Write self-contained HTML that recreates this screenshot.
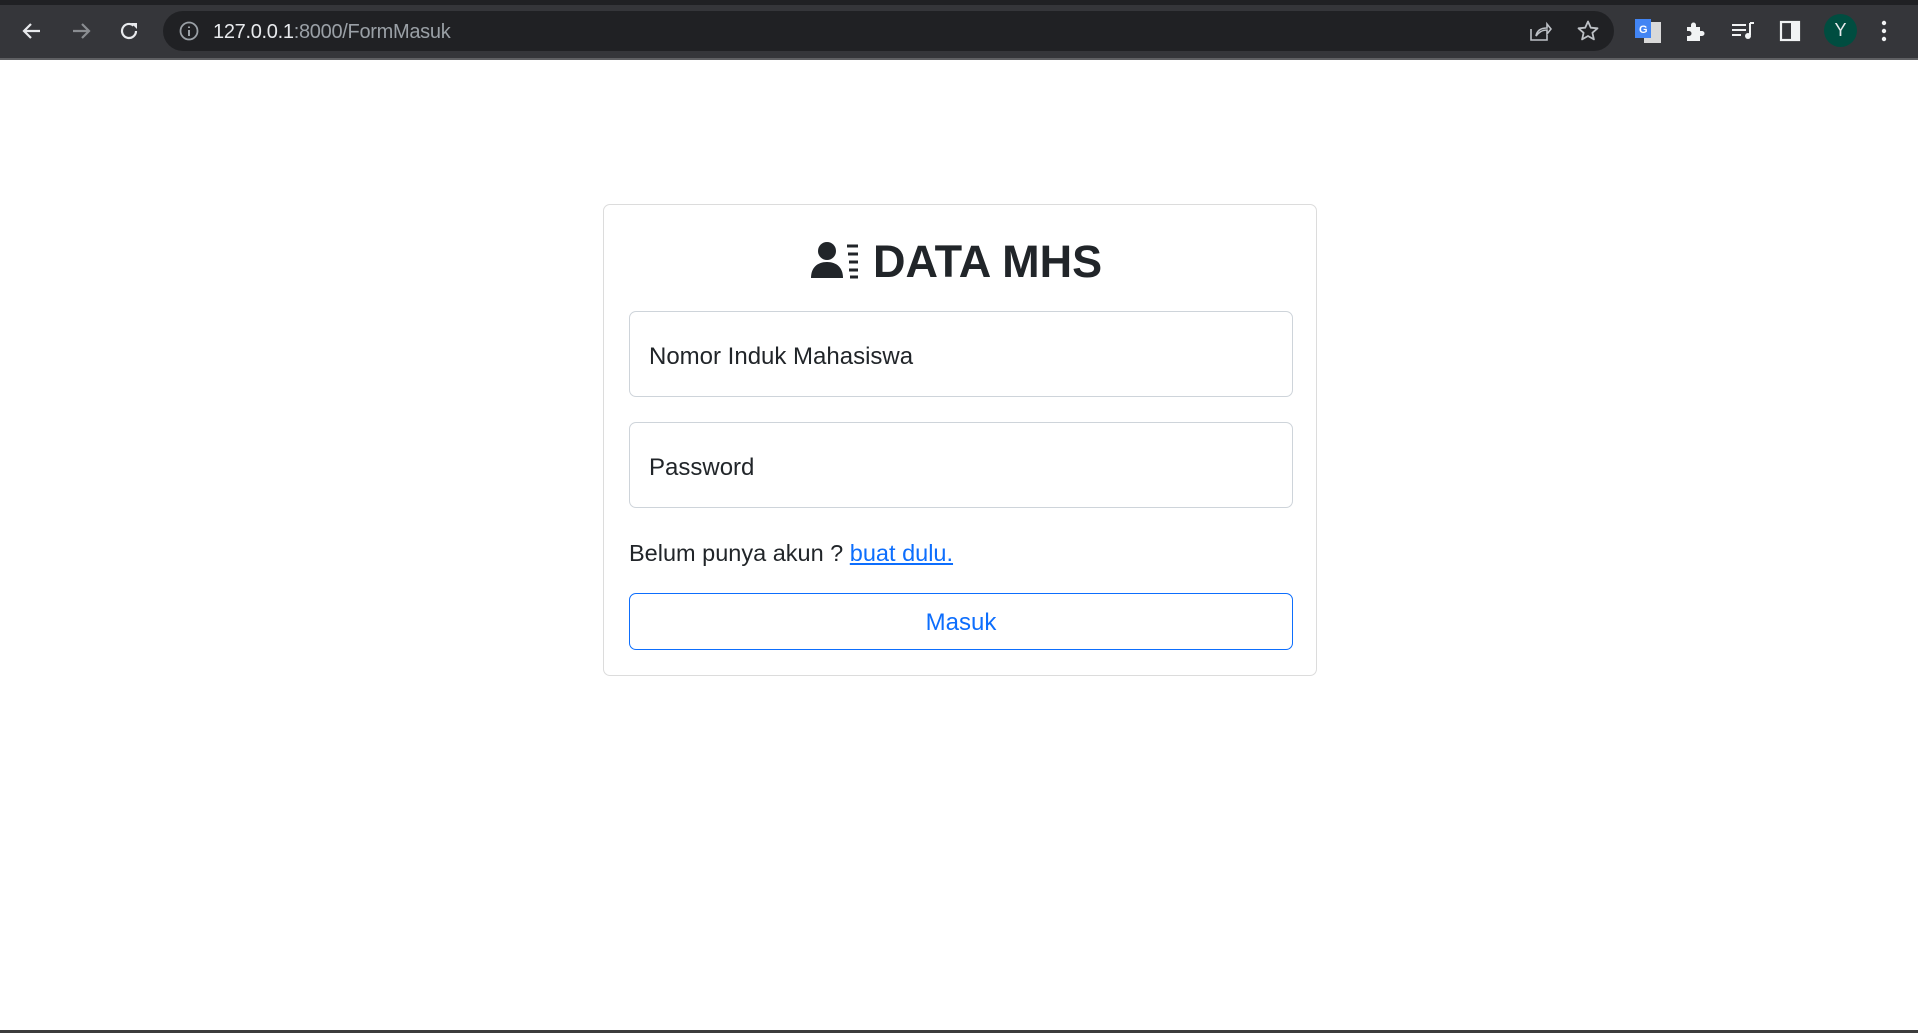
<!DOCTYPE html>
<html><head><meta charset="utf-8"><style>
*{margin:0;padding:0;box-sizing:border-box}
body{width:1918px;height:1033px;background:#fff;font-family:"Liberation Sans",sans-serif;position:relative;overflow:hidden}
.top{position:absolute;left:0;top:0;width:1918px;height:58px;background:#35363a}
.strip{position:absolute;left:0;top:0;width:1918px;height:5px;background:#202124}
.line{position:absolute;left:0;top:58px;width:1918px;height:2px;background:#5f6063}
.omni{position:absolute;left:163px;top:11px;width:1451px;height:40px;border-radius:20px;background:#202124}
.url{position:absolute;left:213px;top:21px;font-size:20px;color:#e8eaed;letter-spacing:-0.3px}
.url span{color:#9aa0a6}
.ic{position:absolute}
.card{position:absolute;left:603px;top:204px;width:714px;height:472px;border:1px solid #dcdcdc;border-radius:7px}
h1{position:absolute;left:873px;top:234px;font-size:45px;font-weight:bold;color:#212529;line-height:56px;font-family:"Liberation Sans",sans-serif}
.inp{position:absolute;left:629px;width:664px;height:86px;border:1px solid #ced4da;border-radius:7px;font-size:24px;color:#212529;padding-left:19px;line-height:90px}
.txt{position:absolute;left:629px;top:540px;font-size:23.5px;color:#212529}
.txt a{color:#0d6efd;text-decoration:underline}
.btn{position:absolute;left:629px;top:593px;width:664px;height:57px;border:1.5px solid #0d6efd;border-radius:7px;color:#0d6efd;font-size:24px;text-align:center;line-height:58px}
.bot{position:absolute;left:0;top:1030px;width:1918px;height:3px;background:#3c3c3c}
</style></head><body>
<div class="top"></div><div class="strip"></div><div class="line"></div>
<svg class="ic" style="left:20px;top:19px" width="24" height="24" viewBox="0 0 24 24"><path d="M20 12H5M11 5l-7 7 7 7" stroke="#e8eaed" stroke-width="2.2" fill="none"/></svg>
<svg class="ic" style="left:69px;top:19px" width="24" height="24" viewBox="0 0 24 24"><path d="M4 12h15M13 5l7 7-7 7" stroke="#8a8d91" stroke-width="2.2" fill="none"/></svg>
<svg class="ic" style="left:117px;top:19px" width="24" height="24" viewBox="0 0 24 24"><path d="M19 12a7 7 0 1 1-2.5-5.4" stroke="#e8eaed" stroke-width="2.2" fill="none"/><path d="M14 4h6v6z" fill="#e8eaed"/></svg>
<div class="omni"></div>
<svg class="ic" style="left:178px;top:20px" width="22" height="22" viewBox="0 0 22 22"><circle cx="11" cy="11" r="8.5" stroke="#9aa0a6" stroke-width="1.8" fill="none"/><path d="M11 10v6M11 6.5v1.5" stroke="#9aa0a6" stroke-width="2"/></svg>
<div class="url">127.0.0.1<span>:8000/FormMasuk</span></div>
<svg class="ic" style="left:1528px;top:19px" width="24" height="24" viewBox="0 0 24 24"><path d="M3 10v11h16v-5M8 17c1-6 5-8 11-8V5l4 5-4 5v-4c-5 0-8 2-11 6z" stroke="#bdc1c6" stroke-width="1.6" fill="none"/></svg>
<svg class="ic" style="left:1576px;top:19px" width="24" height="24" viewBox="0 0 24 24"><path d="M12 2.5l2.8 6.2 6.7.6-5.1 4.5 1.5 6.6L12 17l-5.9 3.4 1.5-6.6L2.5 9.3l6.7-.6z" stroke="#bdc1c6" stroke-width="1.8" fill="none" stroke-linejoin="round"/></svg>
<svg class="ic" style="left:1634px;top:17px" width="28" height="28" viewBox="0 0 28 28"><rect x="10" y="5" width="17" height="21" fill="#d9d9d9"/><rect x="1" y="2" width="16" height="19" fill="#4285f4"/><text x="5" y="16" font-size="11" fill="#fff" font-family="Liberation Sans" font-weight="bold">G</text></svg>
<svg class="ic" style="left:1683px;top:19px" width="24" height="24" viewBox="0 0 24 24"><path d="M4 8h4V6a2.5 2.5 0 0 1 5 0v2h4v4h2a2.5 2.5 0 0 1 0 5h-2v5H4v-5h2a2.5 2.5 0 0 0 0-5H4z" fill="#f1f3f4"/></svg>
<svg class="ic" style="left:1730px;top:19px" width="26" height="24" viewBox="0 0 26 24"><path d="M2 6h14M2 11h14M2 16h9" stroke="#f1f3f4" stroke-width="2"/><path d="M20 4v12" stroke="#f1f3f4" stroke-width="2"/><path d="M20 4h4" stroke="#f1f3f4" stroke-width="2"/><circle cx="18" cy="17" r="3" fill="#f1f3f4"/></svg>
<svg class="ic" style="left:1779px;top:20px" width="22" height="22" viewBox="0 0 22 22"><rect x="2" y="2" width="18" height="18" stroke="#f1f3f4" stroke-width="2.2" fill="none"/><rect x="12" y="2" width="8" height="18" fill="#f1f3f4"/></svg>
<div class="ic" style="left:1824px;top:14px;width:33px;height:33px;border-radius:50%;background:#004d40;color:#e8eaed;font-size:18px;text-align:center;line-height:33px">Y</div>
<svg class="ic" style="left:1880px;top:19px" width="8" height="24" viewBox="0 0 8 24"><circle cx="4" cy="4" r="2.2" fill="#f1f3f4"/><circle cx="4" cy="12" r="2.2" fill="#f1f3f4"/><circle cx="4" cy="20" r="2.2" fill="#f1f3f4"/></svg>

<div class="card"></div>
<svg class="ic" style="left:811px;top:241px" width="50" height="38" viewBox="0 0 50 38"><circle cx="16" cy="10" r="9" fill="#212529"/><path d="M0 37c0-10 6-16 16-16s16 6 16 16z" fill="#212529"/><path d="M36 5h11M37 13h10M38 21h9M38 29h9M39 36h8" stroke="#212529" stroke-width="3"/></svg>
<h1>DATA MHS</h1>
<div class="inp" style="top:311px">Nomor Induk Mahasiswa</div>
<div class="inp" style="top:422px">Password</div>
<div class="txt">Belum punya akun ? <a>buat dulu.</a></div>
<div class="btn">Masuk</div>
<div class="bot"></div>
</body></html>
